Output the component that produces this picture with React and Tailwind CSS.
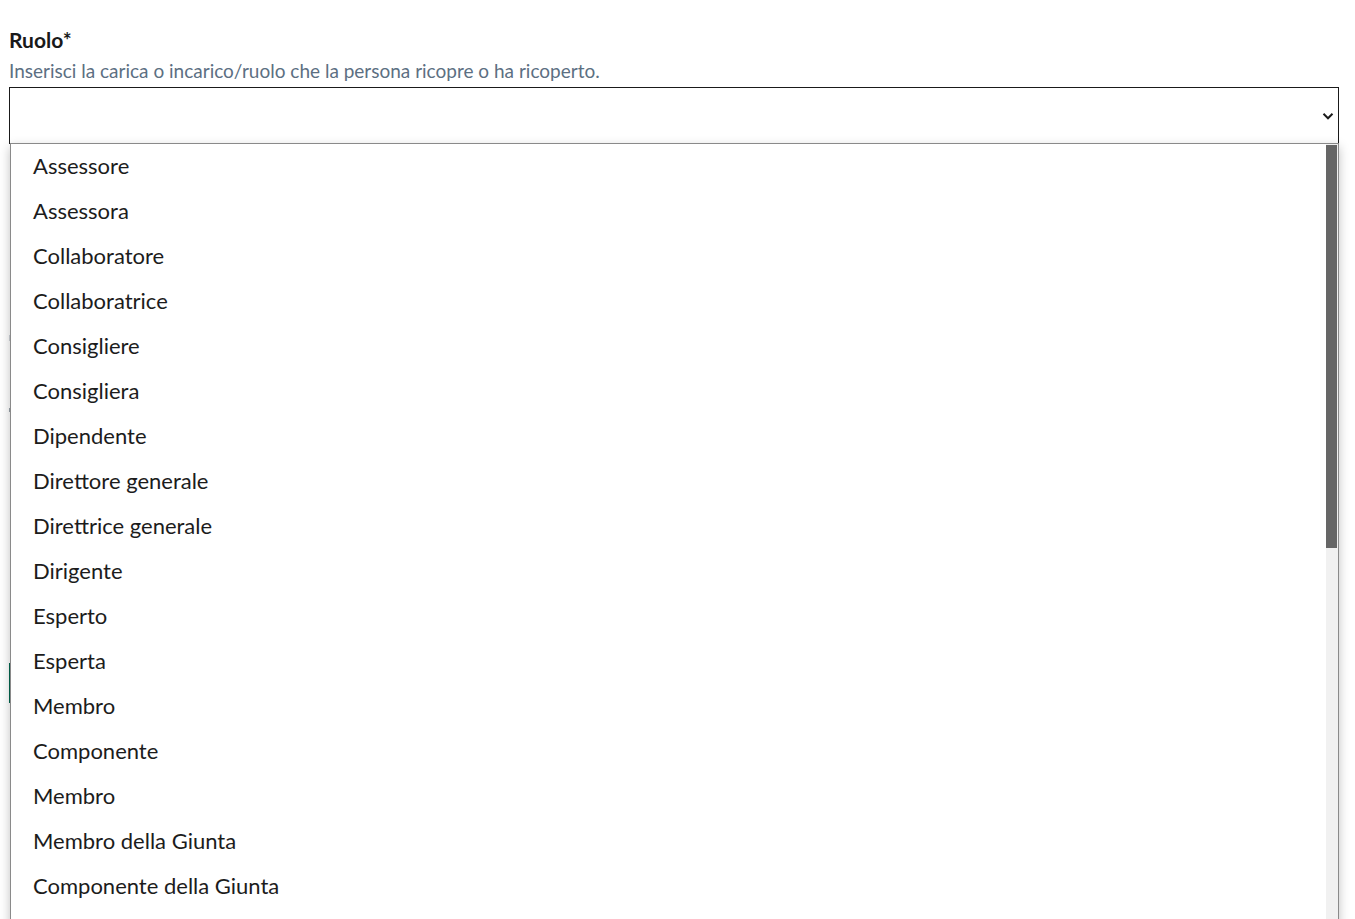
import React from 'react';

const options = [
  'Assessore',
  'Assessora',
  'Collaboratore',
  'Collaboratrice',
  'Consigliere',
  'Consigliera',
  'Dipendente',
  'Direttore generale',
  'Direttrice generale',
  'Dirigente',
  'Esperto',
  'Esperta',
  'Membro',
  'Componente',
  'Membro',
  'Membro della Giunta',
  'Componente della Giunta',
];

const font = { fontFamily: 'Lato, "Noto Sans", sans-serif' };

export default function App() {
  return (
    <div className="relative h-[919px] overflow-hidden bg-white" style={font}>
      <div className="pl-[9px] pr-[16px] pt-[26px]">
        <label className="block text-[21px] font-bold leading-[28px] text-[#19191a]">Ruolo*</label>
        <p className="mt-[4px] text-[19px] leading-[26px] text-[#5c6f82]">
          Inserisci la carica o incarico/ruolo che la persona ricopre o ha ricoperto.
        </p>
        <div className="relative mt-[3px]">
          <div className="flex h-[57px] items-center justify-end border border-[#1a1a1a] bg-white pr-[4px]">
            <svg width="12" height="12" viewBox="0 0 16 16" className="text-[#1a1a1a]">
              <path d="M2 5l6 6 6-6" fill="none" stroke="currentColor" strokeWidth="2.6" />
            </svg>
          </div>

          {/* content behind the open list */}
          <div className="mt-[191px] h-[6px] w-[4px] bg-[#cfd4d9]" />
          <div className="mt-[67px] h-[4px] w-[4px] bg-[#9aa3ab]" />
          <div className="mt-[251px] h-[40px] w-[3px] bg-[#00664d]" />

          <div className="absolute left-[1px] right-0 top-[56px] h-[800px] overflow-hidden border-l border-r border-t border-[#8a8a8a] bg-white shadow-[0_4px_10px_rgba(0,0,0,0.25)]">
            <ul className="-mt-px">
              {options.map((o, i) => (
                <li key={i} className="flex h-[45px] items-center pl-[22px] text-[22px] text-[#1c1c1c]">
                  {o}
                </li>
              ))}
            </ul>
            <div className="absolute right-0 top-0 h-full w-[12px] bg-[#f1f1f1]">
              <div className="mt-[1px] h-[403px] w-[11px] bg-[#666666]" />
            </div>
          </div>
        </div>
      </div>
    </div>
  );
}
